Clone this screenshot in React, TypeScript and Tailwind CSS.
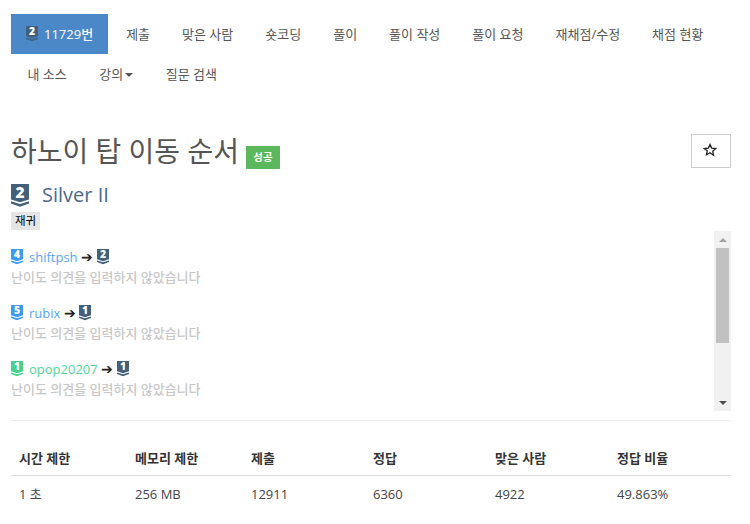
const FONT = "font-['Open_Sans','Noto_Sans_CJK_KR',sans-serif]";

function Tier({ n, color, size = 14 }: { n: number; color: string; size?: number }) {
  return (
    <svg width={size} height={size * 1.27} viewBox="0 0 22 28" className="inline-block shrink-0 overflow-visible align-[-3px]">
      <path d="M0 0H22V19L11 22.5L0 19Z" fill={color} />
      <path d="M0 21L11 24.5L22 21V24L11 28L0 24Z" fill={color} />
      <text x="11" y="17" textAnchor="middle" fontSize="19" fontWeight="800" fill="#fff" fontFamily="Open Sans, sans-serif">
        {n}
      </text>
    </svg>
  );
}

const NAVY = "#435f7a";
const BLUE = "#3b9bf5";
const GREEN = "#47d18c";

const row1 = ["제출", "맞은 사람", "숏코딩", "풀이", "풀이 작성", "풀이 요청", "재채점/수정", "채점 현황"];

function Opinion({ from, fromN, name, nameClass, to }: { from: string; fromN: number; name: string; nameClass: string; to: number }) {
  return (
    <div className="mb-[16px] text-[13px] leading-[20px]">
      <div className="flex h-[20px] items-center">
        <Tier n={fromN} color={from} size={12} />
        <span className={`ml-[6px] ${nameClass}`}>{name}</span>
        <span className="mx-[3.5px] text-[14px] text-[#222]">➔</span>
        <Tier n={to} color={NAVY} size={12} />
      </div>
      <div className="h-[20px] font-medium text-[#c8c8c8]">난이도 의견을 입력하지 않았습니다</div>
    </div>
  );
}

export default function App() {
  return (
    <div className={`${FONT} h-[524px] w-[750px] overflow-hidden bg-white pl-[11px] pr-[19px] pt-[14px] text-[#555]`}>
      <nav className="flex flex-wrap text-[13px] leading-[40px]">
        <div className="mr-[2px] flex h-[40px] items-center gap-[6px] bg-[#4a88c7] px-[15px] font-medium text-white">
          <Tier n={2} color={NAVY} size={12} />
          <span>11729번</span>
        </div>
        {row1.map((t) => (
          <div key={t} className="h-[40px] px-[16px]">{t}</div>
        ))}
        <div className="h-[40px] px-[16.5px]">내 소스</div>
        <div className="flex h-[40px] items-center px-[16px]">
          강의
          <span className="ml-[2px] mt-[2px] h-0 w-0 border-x-[4px] border-t-[4px] border-x-transparent border-t-[#555]" />
        </div>
        <div className="h-[40px] px-[16.5px]">질문 검색</div>
      </nav>

      <div className="mt-[26px] flex h-[47px] items-start justify-between pt-[14px]">
        <div className="flex items-start">
          <h1 className="text-[28px] leading-[34px] text-[#555]">하노이 탑 이동 순서</h1>
          <span className="ml-[7px] mt-[12px] flex h-[23px] w-[34px] items-center justify-center bg-[#5cb85c] text-[10.5px] font-bold text-white">성공</span>
        </div>
        <button className="flex h-[34px] w-[40px] items-center justify-center border border-[#ccc] bg-white pb-[2px] pr-[2px] text-[#222]">
          <svg width="14" height="14" viewBox="0 0 24 24" fill="none" stroke="#222" strokeWidth="2.2" strokeLinejoin="miter">
            <path d="M12 2.5l2.9 6.3 6.9.8-5.1 4.7 1.4 6.8L12 16.8l-6.1 3.3 1.4-6.8L2.2 9.6l6.9-.8z" />
          </svg>
        </button>
      </div>

      <div className="mt-[16px] flex h-[24px] items-center">
        <Tier n={2} color={NAVY} size={18} />
        <span className="ml-[13px] text-[20px] leading-[24px] text-[#4b6a8c]">Silver II</span>
      </div>
      <div className="mt-[5px] flex h-[18px] w-[29px] items-center justify-center bg-[#e5e5e5] text-[11.5px] text-black">재귀</div>

      <div className="mt-[1px] flex h-[180px] gap-0">
        <div className="min-w-0 flex-1 overflow-hidden pt-[16px]">
          <Opinion from={BLUE} fromN={4} name="shiftpsh" nameClass="text-[#5aa5f5]" to={2} />
          <Opinion from={BLUE} fromN={5} name="rubix" nameClass="text-[#5aa5f5]" to={1} />
          <Opinion from={GREEN} fromN={1} name="opop20207" nameClass="text-[#51d497]" to={1} />
        </div>
        <div className="flex w-[17px] flex-col items-center bg-[#f1f1f1]">
          <div className="flex h-[17px] shrink-0 items-center justify-center">
            <span className="h-0 w-0 border-x-[4px] border-b-[4px] border-x-transparent border-b-[#a3a3a3]" />
          </div>
          <div className="h-[95px] w-[13px] shrink-0 bg-[#c1c1c1]" />
          <div className="flex-1" />
          <div className="flex h-[17px] shrink-0 items-center justify-center">
            <span className="h-0 w-0 border-x-[4px] border-t-[4px] border-x-transparent border-t-[#505050]" />
          </div>
        </div>
      </div>

      <div className="mt-[9px] border-t border-[#eee]" />

      <div className="mt-[19px] text-[13px] text-[#333]">
        <div className="grid h-[36px] grid-cols-[116px_116px_122px_122px_122px_122px] border-b border-[#ddd] font-bold leading-[20px] text-[#333]">
          {["시간 제한", "메모리 제한", "제출", "정답", "맞은 사람", "정답 비율"].map((h) => (
            <div key={h} className="px-[8px] pt-[8px]">{h}</div>
          ))}
        </div>
        <div className="grid grid-cols-[116px_116px_122px_122px_122px_122px] leading-[20px] text-[#444]">
          {["1 초", "256 MB", "12911", "6360", "4922", "49.863%"].map((c) => (
            <div key={c} className="px-[8px] pt-[8px]">{c}</div>
          ))}
        </div>
      </div>
    </div>
  );
}
